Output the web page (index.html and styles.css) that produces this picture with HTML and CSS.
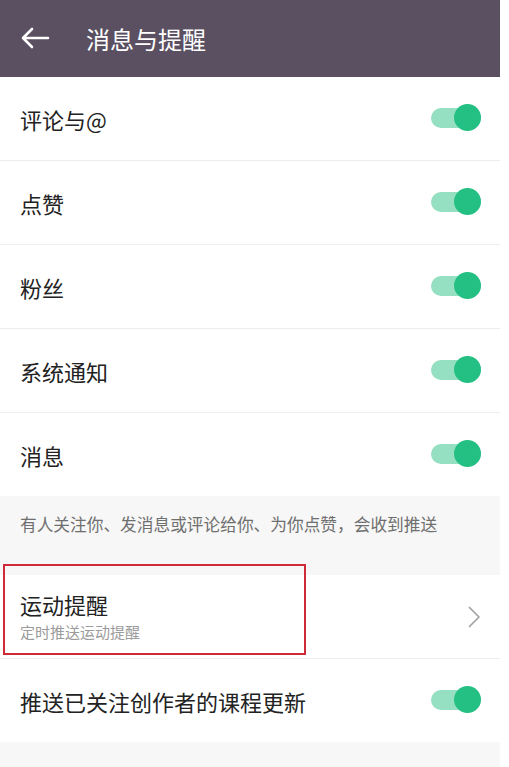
FILE: index.html
```html
<!DOCTYPE html>
<html lang="zh-CN">
<head>
<meta charset="utf-8">
<title>消息与提醒</title>
<link rel="stylesheet" href="styles.css">
</head>
<body>
<div class="page">
  <header class="topbar">
    <svg class="back" width="30" height="22" viewBox="0 0 30 22">
      <path d="M28 11H3M12 2L3 11l9 9" fill="none" stroke="#fff" stroke-width="2.6" stroke-linecap="round" stroke-linejoin="round"/>
    </svg>
    <h1 class="title">消息与提醒</h1>
  </header>

  <div class="list">
    <div class="row"><span class="label">评论与@</span><span class="toggle"><span class="knob"></span></span></div>
    <div class="row"><span class="label">点赞</span><span class="toggle"><span class="knob"></span></span></div>
    <div class="row"><span class="label">粉丝</span><span class="toggle"><span class="knob"></span></span></div>
    <div class="row"><span class="label">系统通知</span><span class="toggle"><span class="knob"></span></span></div>
    <div class="row"><span class="label">消息</span><span class="toggle"><span class="knob"></span></span></div>
  </div>

  <div class="note">有人关注你、发消息或评论给你、为你点赞，会收到推送</div>

  <div class="list">
    <div class="row row-sub">
      <div class="texts">
        <span class="label">运动提醒</span>
        <span class="sub">定时推送运动提醒</span>
      </div>
      <svg class="chev" width="14" height="22" viewBox="0 0 14 22">
        <path d="M2 1l10 10-10 10" fill="none" stroke="#a0a0a0" stroke-width="1.6" stroke-linejoin="round"/>
      </svg>
      <span class="highlight"></span>
    </div>
    <div class="row"><span class="label">推送已关注创作者的课程更新</span><span class="toggle"><span class="knob"></span></span></div>
  </div>

  <div class="tail"></div>
</div>
</body>
</html>
```
FILE: styles.css
```css
html, body {
  margin: 0;
  padding: 0;
  background: #ffffff;
}
body {
  font-family: "Noto Sans CJK SC", "Noto Sans", sans-serif;
  color: #222222;
}
.page {
  width: 500px;
  min-height: 767px;
  background: #f7f7f7;
}
.topbar {
  height: 77px;
  background: #5a5061;
  display: flex;
  align-items: center;
  padding-left: 20px;
  box-sizing: border-box;
}
.back {
  display: block;
  margin-top: -2px;
}
.title {
  margin: 0 0 0 36px;
  font-size: 24px;
  font-weight: 400;
  color: #ffffff;
  line-height: 1;
}
.list {
  background: #ffffff;
}
.row {
  position: relative;
  height: 84px;
  box-sizing: border-box;
  border-bottom: 1px solid #ededed;
  display: flex;
  align-items: center;
  justify-content: space-between;
  padding: 0 19px 0 20px;
}
.list .row:last-child {
  border-bottom-color: #f7f7f7;
}
.label {
  font-size: 22px;
  line-height: 1;
  color: #222222;
}
.toggle {
  position: relative;
  width: 50px;
  height: 20px;
  margin-top: -1px;
  border-radius: 10px;
  background: #95e0c2;
}
.knob {
  position: absolute;
  right: 0;
  top: -4px;
  width: 27px;
  height: 27px;
  border-radius: 50%;
  background: #24c083;
}
.note {
  height: 78px;
  box-sizing: border-box;
  padding: 17px 20px 0;
  font-size: 16.7px;
  line-height: 20px;
  color: #6f6f6f;
}
.texts {
  display: flex;
  flex-direction: column;
  gap: 9px;
  margin-top: -2px;
}
.sub {
  font-size: 15px;
  line-height: 1;
  color: #9b9b9b;
}
.chev {
  display: block;
}
.highlight {
  position: absolute;
  left: 3px;
  top: -11px;
  width: 299px;
  height: 87px;
  border: 2px solid #cf2a38;
}
.tail {
  height: 25px;
}
```
